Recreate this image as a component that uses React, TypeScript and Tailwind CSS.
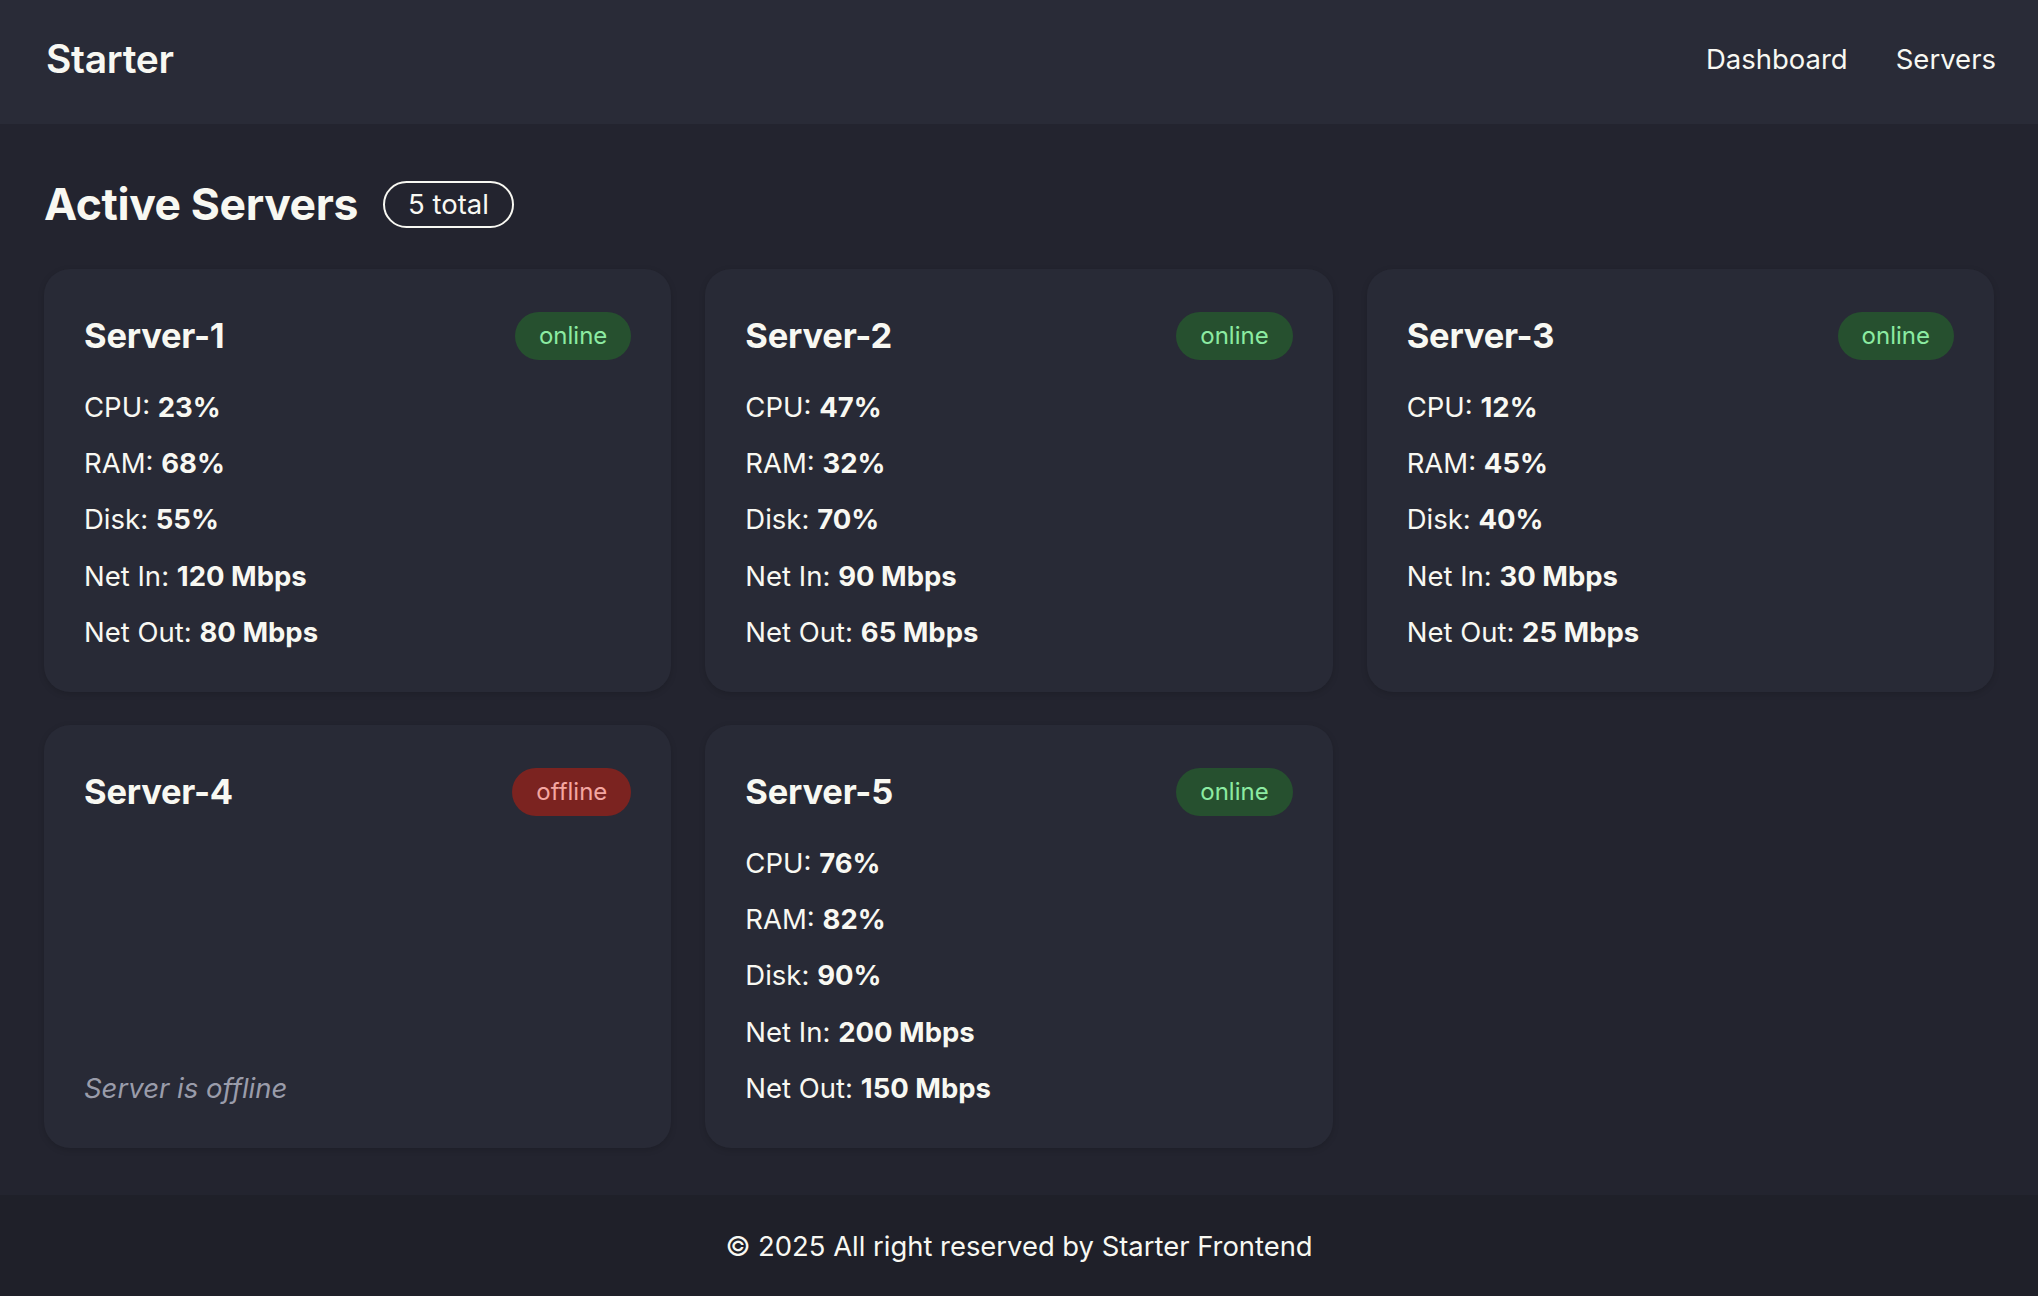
import React from "react";

type Server = {
  name: string;
  status: "online" | "offline";
  cpu?: number;
  ram?: number;
  disk?: number;
  netIn?: number;
  netOut?: number;
};

const servers: Server[] = [
  { name: "Server-1", status: "online", cpu: 23, ram: 68, disk: 55, netIn: 120, netOut: 80 },
  { name: "Server-2", status: "online", cpu: 47, ram: 32, disk: 70, netIn: 90, netOut: 65 },
  { name: "Server-3", status: "online", cpu: 12, ram: 45, disk: 40, netIn: 30, netOut: 25 },
  { name: "Server-4", status: "offline" },
  { name: "Server-5", status: "online", cpu: 76, ram: 82, disk: 90, netIn: 200, netOut: 150 },
];

function Stat({ label, value }: { label: string; value: string }) {
  return (
    <p className="h-[56.2px] leading-[56px]">
      {label}: <span className="font-bold">{value}</span>
    </p>
  );
}

function ServerCard({ server }: { server: Server }) {
  const online = server.status === "online";
  return (
    <article className="flex flex-col rounded-[26px] bg-[#282a36] px-[40px] pb-[32px] pt-[43px] shadow-[0_2px_6px_rgba(0,0,0,0.15)]">
      <div className="mb-[19px] flex h-[48px] items-center justify-between">
        <h2 className="text-[34.5px] font-bold tracking-[-0.2px]">{server.name}</h2>
        <span
          className={`flex h-[48px] items-center rounded-full px-[24px] text-[24px] ${
            online ? "bg-[#26502f] text-[#8ceba2]" : "bg-[#7b2320] text-[#f4a6a1]"
          }`}
        >
          {server.status}
        </span>
      </div>

      {online ? (
        <div className="text-[27.5px]">
          <Stat label="CPU" value={`${server.cpu}%`} />
          <Stat label="RAM" value={`${server.ram}%`} />
          <Stat label="Disk" value={`${server.disk}%`} />
          <Stat label="Net In" value={`${server.netIn} Mbps`} />
          <Stat label="Net Out" value={`${server.netOut} Mbps`} />
        </div>
      ) : (
        <p className="mt-auto h-[56px] text-[27.5px] italic leading-[56px] text-[#9a9caa]">
          Server is offline
        </p>
      )}
    </article>
  );
}

export default function App() {
  return (
    <div className="flex min-h-screen flex-col bg-[#23242f] font-['Inter',sans-serif] text-[#f8f8f2]">
      <header className="flex h-[124px] items-center justify-between bg-[#292b37] pb-[5px] pl-[46px] pr-[42px]">
        <span className="text-[39px] font-semibold tracking-[-0.3px]">Starter</span>
        <nav className="flex items-center gap-[48px] text-[27.5px]">
          <a href="#">Dashboard</a>
          <a href="#">Servers</a>
        </nav>
      </header>

      <main className="flex-1 px-[44px] pb-[47px] pt-[57px]">
        <div className="mb-[41px] flex h-[47px] items-center gap-[25px]">
          <h1 className="text-[44.5px] font-bold tracking-[-0.4px]">Active Servers</h1>
          <span className="flex h-[47px] items-center rounded-full border-2 border-[#f8f8f2] px-[23px] text-[27.5px]">
            5 total
          </span>
        </div>

        <div className="grid grid-cols-3 gap-x-[34px] gap-y-[33px]">
          {servers.map((server) => (
            <ServerCard key={server.name} server={server} />
          ))}
        </div>
      </main>

      <footer className="flex h-[106px] items-center justify-center bg-[#1f2029] pb-[2px] text-[27.4px]">
        © 2025 All right reserved by Starter Frontend
      </footer>
    </div>
  );
}
